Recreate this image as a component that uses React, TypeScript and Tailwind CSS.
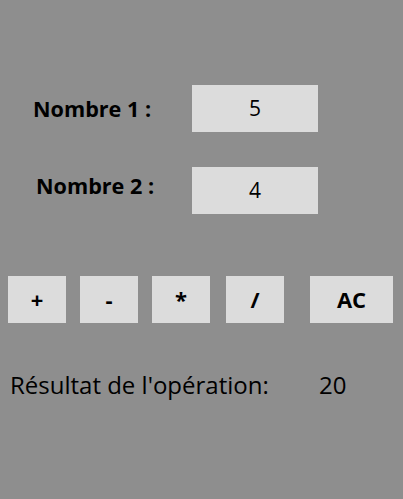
export default function App() {
  return (
    <div
      className="w-[403px] h-[499px] bg-[#8e8e8e] text-black overflow-hidden"
      style={{ fontFamily: '"Open Sans", "DejaVu Sans", sans-serif' }}
    >
      <div className="pt-[85px]">
        <div className="flex items-center h-[47px]">
          <label className="ml-[33px] w-[159px] text-[21.6px] font-bold leading-none">Nombre 1 :</label>
          <div className="w-[126px] h-[47px] bg-[#dcdcdc] flex items-center justify-center text-[21px]">5</div>
        </div>
        <div className="flex items-start h-[47px] mt-[35px]">
          <label className="ml-[36px] w-[156px] mt-[8px] text-[21.6px] font-bold leading-none">Nombre 2 :</label>
          <div className="w-[126px] h-[47px] bg-[#dcdcdc] flex items-center justify-center text-[21px]">4</div>
        </div>
      </div>

      <div className="flex mt-[62px] pl-[8px]">
        <button className="w-[58px] h-[47px] bg-[#dcdcdc] font-bold text-[22px]">+</button>
        <button className="ml-[14px] w-[58px] h-[47px] bg-[#dcdcdc] font-bold text-[22px]">-</button>
        <button className="ml-[14px] w-[58px] h-[47px] bg-[#dcdcdc] font-bold text-[22px]">*</button>
        <button className="ml-[16px] w-[58px] h-[47px] bg-[#dcdcdc] font-bold text-[22px]">/</button>
        <button className="ml-[26px] w-[83px] h-[47px] bg-[#dcdcdc] font-bold text-[22px]">AC</button>
      </div>

      <div className="flex items-center mt-[44px] pl-[10px] text-[24px] leading-[36px]">
        <span className="w-[309px]">Résultat de l'opération:</span>
        <span>20</span>
      </div>
    </div>
  );
}
